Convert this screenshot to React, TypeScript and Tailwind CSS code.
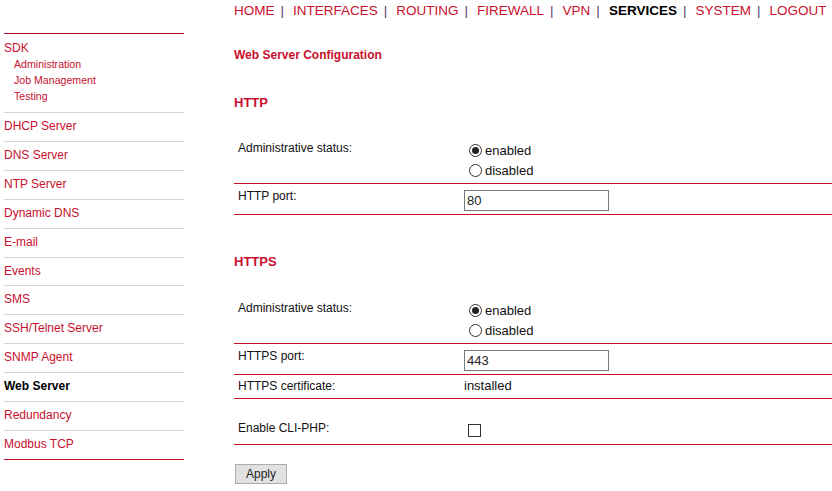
import React from 'react';

const navItems = ['HOME', 'INTERFACES', 'ROUTING', 'FIREWALL', 'VPN', 'SERVICES', 'SYSTEM', 'LOGOUT'];

const sideItems = [
  'DHCP Server',
  'DNS Server',
  'NTP Server',
  'Dynamic DNS',
  'E-mail',
  'Events',
  'SMS',
  'SSH/Telnet Server',
  'SNMP Agent',
  'Web Server',
  'Redundancy',
  'Modbus TCP',
];

const Radio: React.FC<{ checked?: boolean; label: string }> = ({ checked, label }) => (
  <div className="flex items-center h-[19.5px]">
    <span className="ml-[5px] mr-[3px] w-[13px] h-[13px] rounded-full border border-[#333] bg-white flex items-center justify-center">
      {checked && <span className="w-[7px] h-[7px] rounded-full bg-[#222]" />}
    </span>
    <span className="text-[13px] leading-[15px] text-[#111]">{label}</span>
  </div>
);

const StatusRow: React.FC<{ tall?: boolean }> = ({ tall }) => (
  <div className={`flex border-b border-[#c8102e] ${tall ? 'h-[75px] pt-[1px]' : 'h-[74px]'}`}>
    <div className="w-[230px] pl-[4px] pt-[31px] text-[12px] leading-[14px]">Administrative status:</div>
    <div className="pt-[31px]">
      <Radio checked label="enabled" />
      <Radio label="disabled" />
    </div>
  </div>
);

const PortRow: React.FC<{ label: string; value: string }> = ({ label, value }) => (
  <div className="flex h-[31px] border-b border-[#c8102e]">
    <div className="w-[230px] pl-[4px] pt-[5px] text-[12px] leading-[14px]">{label}</div>
    <div className="pt-[4px]">
      <input
        defaultValue={value}
        className="w-[145px] h-[21px] border border-[#7a7a7a] px-[2px] text-[13px] text-[#222] outline-none"
      />
    </div>
  </div>
);

export default function App() {
  return (
    <div className="flex bg-white text-[#111] min-h-[491px]" style={{ fontFamily: '"Liberation Sans", Arial, sans-serif' }}>
      {/* Sidebar */}
      <div className="ml-[4px] w-[180px] shrink-0">
        <div className="mt-[33px] border-t border-[#b8112a]">
          <div className="pt-[7px] pb-[8px] border-b border-[#d3d3d8]">
            <div className="text-[12px] leading-[14px] text-[#c8102e]">SDK</div>
            <div className="mt-[1px] pl-[10px] text-[10.6px] leading-[16px] text-[#c8102e]">
              <div>Administration</div>
              <div>Job Management</div>
              <div>Testing</div>
            </div>
          </div>
          {sideItems.map((item, i) => {
            const active = item === 'Web Server';
            const last = i === sideItems.length - 1;
            return (
              <div
                key={item}
                className={`py-[7px] text-[12px] leading-[13.9px] border-b ${last ? 'border-[#b8112a]' : 'border-[#d3d3d8]'} ${
                  active ? 'font-bold text-black' : 'text-[#c8102e]'
                }`}
              >
                {item}
              </div>
            );
          })}
        </div>
      </div>

      {/* Main */}
      <div className="ml-[50px] flex-1">
        <div className="h-[24px] pt-[3px] flex text-[13.5px] leading-[16px] whitespace-nowrap">
          {navItems.map((item, i) => (
            <React.Fragment key={item}>
              <span className={item === 'SERVICES' ? 'font-bold text-black' : 'text-[#c8102e]'}>{item}</span>
              {i < navItems.length - 1 && <span className="ml-[6px] mr-[9px] text-[#5a3a6e]">|</span>}
            </React.Fragment>
          ))}
        </div>

        <div className="pt-[24px] text-[12px] leading-[14px] font-bold text-[#c8102e]">Web Server Configuration</div>

        <div className="mt-[33px] text-[13px] leading-[15px] font-bold text-[#c8102e]">HTTP</div>
        <StatusRow />
        <PortRow label="HTTP port:" value="80" />

        <div className="mt-[39px] text-[13px] leading-[15px] font-bold text-[#c8102e]">HTTPS</div>
        <StatusRow tall />
        <PortRow label="HTTPS port:" value="443" />

        <div className="flex h-[24px] border-b border-[#c8102e]">
          <div className="w-[230px] pl-[4px] pt-[4px] text-[12px] leading-[14px]">HTTPS certificate:</div>
          <div className="pt-[4px] text-[13px] leading-[14px]">installed</div>
        </div>

        <div className="flex h-[46px] border-b border-[#c8102e]">
          <div className="w-[230px] pl-[4px] pt-[22px] text-[12px] leading-[14px]">Enable CLI-PHP:</div>
          <div className="pt-[25px] pl-[4px]">
            <span className="block w-[13px] h-[13px] border border-[#333] bg-white" />
          </div>
        </div>

        <button className="mt-[19px] ml-[1px] w-[52px] h-[20px] bg-[#e1e1e1] border border-[#adadad] text-[12px] text-[#222] leading-[18px]">
          Apply
        </button>
      </div>
    </div>
  );
}
